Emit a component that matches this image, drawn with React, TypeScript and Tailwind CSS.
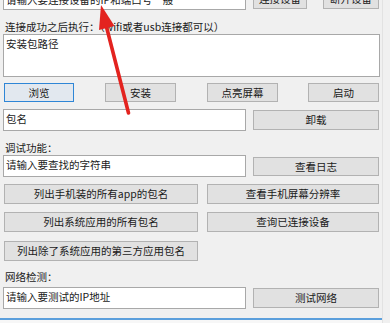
import React from "react";

const font = "font-['Noto_Sans_CJK_SC','Noto_Sans',sans-serif] text-[10.5px] leading-[12px] text-[#1a1a1a]";

function Btn({ label, className = "", focused = false }: { label: string; className?: string; focused?: boolean }) {
  return (
    <div
      className={
        "flex items-center justify-center border shrink-0 " +
        (focused ? "border-[#2f86d6] bg-[#e2e8ef] " : "border-[#b2b2b2] bg-[#e1e1e1] ") +
        className
      }
    >
      <span className="whitespace-nowrap">{label}</span>
    </div>
  );
}

function Field({ text, className = "" }: { text: string; className?: string }) {
  return (
    <div className={"border border-[#a8a8a8] bg-white pl-[2px] pt-[3px] shrink-0 whitespace-nowrap overflow-hidden " + className}>
      {text}
    </div>
  );
}

export default function App() {
  return (
    <div className={"relative w-[390px] h-[323px] overflow-hidden bg-[#f0f0f0] " + font}>
      <div className="flex flex-col w-[383px] border-r border-[#e2e2e2] h-full">
        <div className="flex flex-col pl-[3px]">
          {/* row 1 */}
          <div className="flex items-start mt-[-12px] h-[22px]">
            <div className="border border-[#a8a8a8] bg-white pl-[2px] pt-[5px] w-[243px] h-[22px] whitespace-nowrap overflow-hidden">
              请输入要连接设备的IP和端口号一般
            </div>
            <Btn label="连接设备" className="ml-[7px] mt-[1px] w-[54px] h-[20px]" />
            <Btn label="断开设备" className="ml-[16px] mt-[1px] w-[56px] h-[20px]" />
          </div>

          <div className="mt-[11px] h-[12px] pl-[2px] whitespace-nowrap">连接成功之后执行：（wifi或者usb连接都可以）</div>

          <Field text="安装包路径" className="mt-[1px] w-[377px] h-[43px]" />

          <div className="flex mt-[6px] h-[19px]">
            <Btn label="浏览" focused className="ml-[1px] w-[70px] h-[19px]" />
            <Btn label="安装" className="ml-[31px] w-[71px] h-[19px]" />
            <Btn label="点亮屏幕" className="ml-[31px] w-[71px] h-[19px]" />
            <Btn label="启动" className="ml-[30px] w-[71px] h-[19px]" />
          </div>

          <div className="flex items-start mt-[7px]">
            <Field text="包名" className="w-[243px] h-[22px]" />
            <Btn label="卸载" className="ml-[7px] mt-[1px] w-[126px] h-[20px]" />
          </div>

          <div className="mt-[11px] h-[12px] pl-[2px] whitespace-nowrap">调试功能：</div>

          <div className="flex items-start mt-[1px]">
            <Field text="请输入要查找的字符串" className="w-[243px] h-[22px]" />
            <Btn label="查看日志" className="ml-[7px] mt-[2px] w-[126px] h-[19px]" />
          </div>

          <div className="flex mt-[7px]">
            <Btn label="列出手机装的所有app的包名" className="ml-[1px] w-[194px] h-[20px]" />
            <Btn label="查看手机屏幕分辨率" className="ml-[9px] w-[172px] h-[20px]" />
          </div>

          <div className="flex mt-[8px]">
            <Btn label="列出系统应用的所有包名" className="ml-[1px] w-[194px] h-[20px]" />
            <Btn label="查询已连接设备" className="ml-[9px] w-[172px] h-[20px]" />
          </div>

          <div className="flex mt-[9px]">
            <Btn label="列出除了系统应用的第三方应用包名" className="ml-[1px] w-[194px] h-[20px]" />
          </div>

          <div className="mt-[10px] h-[12px] pl-[2px] whitespace-nowrap">网络检测：</div>

          <div className="flex items-start mt-[4px]">
            <Field text="请输入要测试的IP地址" className="w-[243px] h-[22px]" />
            <Btn label="测试网络" className="ml-[7px] mt-[1px] w-[126px] h-[20px]" />
          </div>
        </div>
        <div className="mt-[9px] h-[2px] bg-[#5b9fdc]" />
        <div className="flex-1 bg-[#f7f7f7]" />
      </div>

      {/* red annotation arrow */}
      <svg className="absolute left-0 top-0 pointer-events-none" width="390" height="323" viewBox="0 0 390 323">
        <line x1="128.5" y1="113" x2="106" y2="25" stroke="#e3231f" strokeWidth="3.6" strokeLinecap="round" />
        <polygon points="101,5 114.5,26 99,30" fill="#e3231f" />
      </svg>
    </div>
  );
}
